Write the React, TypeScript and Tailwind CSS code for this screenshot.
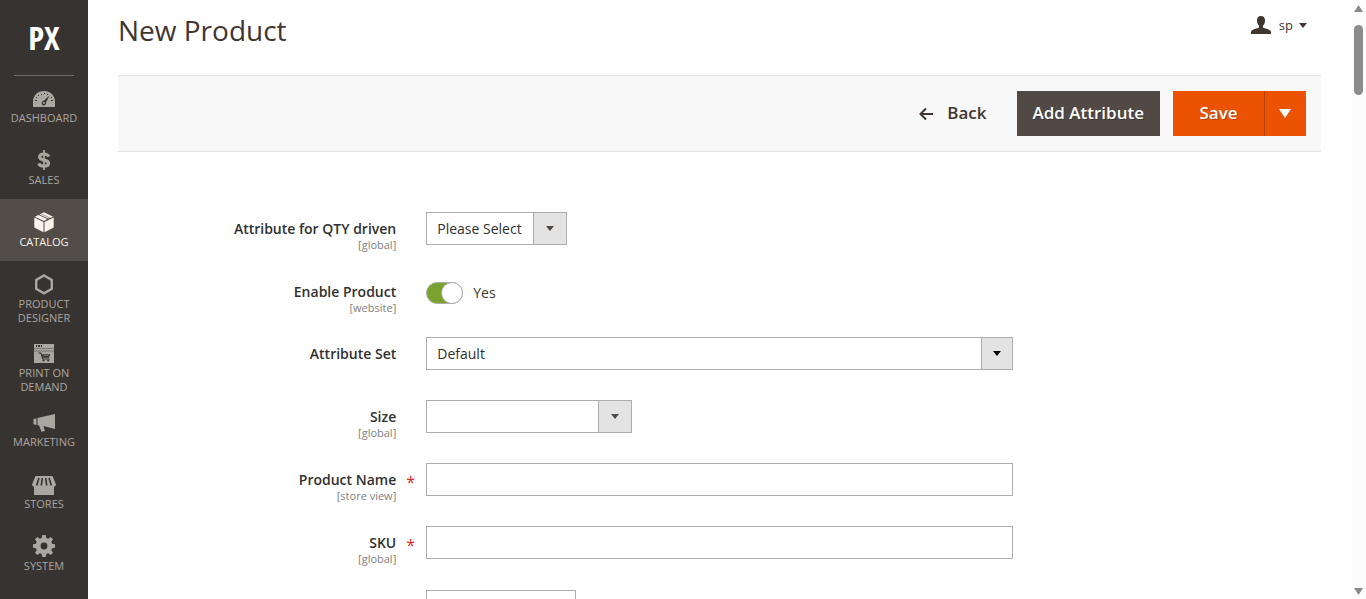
import { ReactNode } from "react";

interface MenuItemProps {
	label: string;
	icon: ReactNode;
	active?: boolean;
}

interface FieldProps {
	id: string;
	label: string;
	scope?: string;
	required?: boolean;
	className?: string;
	children: ReactNode;
}

interface SelectProps {
	id: string;
	options: string[];
	className: string;
	arrow?: string;
}

const DashboardIcon = () => (
	<svg width="24" height="24" viewBox="0 0 24 24" fill="currentColor">
		<path d="M1 21v-5C1 9.500 5.500 5 12 5s11 4.500 11 11v5z" />
		<g className="fill-[#373330]">
			<rect x="3" y="14" width="2" height="1" />
			<rect x="4" y="11" width="1" height="1" />
			<rect x="6" y="9" width="1" height="1" />
			<rect x="9" y="8" width="1" height="1" />
			<rect x="12" y="7" width="1" height="1" />
			<rect x="15" y="8" width="1" height="1" />
			<rect x="19" y="11" width="1" height="1" />
			<rect x="19" y="14" width="2" height="1" />
			<path d="M17.500 9.500 14 16.500a2.200 2.200 0 1 1-2.500-1.500z" />
		</g>
		<circle cx="12" cy="17" r="1" />
	</svg>
);

const SalesIcon = () => (
	<svg width="24" height="24" viewBox="0 0 24 24" fill="none" stroke="currentColor">
		<path strokeWidth="3.200" d="M16.800 8.600C15.900 6.700 14.200 6 12 6c-2.600 0-4.300 1.100-4.300 2.900 0 4.400 8.800 2.100 8.800 6.300 0 1.900-1.800 3-4.500 3-2.500 0-4.400-.9-5.300-2.900" />
		<path strokeWidth="1.800" d="M12 2v20" />
	</svg>
);

const CatalogIcon = () => (
	<svg width="24" height="24" viewBox="0 0 24 24" fill="currentColor">
		<path d="M2.300 7.600 11.500 12v10.200l-9.200-4.700z" />
		<path d="M21.700 7.600 12.500 12v10.200l9.200-4.700z" />
		<path d="m2.800 6.700 3.700-1.800 8.800 4.200-3.300 1.900z" />
		<path d="m7.400 4.400 4.600-2.200 9.200 4.500-4.800 1.900z" />
		<path d="m9 3.700 9 4.200" fill="none" strokeWidth=".5" className="stroke-[#524d49]" />
	</svg>
);

const DesignerIcon = () => (
	<svg width="24" height="24" viewBox="0 0 24 24" fill="none" stroke="currentColor" strokeWidth="2.400">
		<path d="m12 3.500 7.800 4.400v9L12 21.300l-7.800-4.400v-9z" />
	</svg>
);

const PrintIcon = () => (
	<svg width="24" height="24" viewBox="0 0 24 24" fill="currentColor">
		<path d="M2 3h20v19H2z" />
		<g className="fill-[#373330]">
			<rect x="4" y="4" width="1" height="2" />
			<rect x="6" y="4" width="2" height="2" />
			<rect x="9" y="4" width="1" height="2" />
			<path d="M9.500 13.200h8.800l-1.300 3.600h-6.300z" />
			<circle cx="11.500" cy="19.500" r="1.100" />
			<circle cx="16.200" cy="19.500" r="1.100" />
		</g>
		<g fill="none" className="stroke-[#373330]">
			<path strokeWidth=".4" d="M2 7.500h20" />
			<path strokeWidth=".5" d="M2 9.500q1.200 2 2.500 0 1.200 2 2.500 0 1.200 2 2.500 0 1.200 2 2.500 0 1.200 2 2.500 0 1.200 2 2.500 0 1.200 2 2.500 0 1.200 2 2.500 0" />
			<path strokeWidth="1.100" d="M6.500 12h2.300l2 6h6.700" />
		</g>
		<path d="M11.500 14.500h5" fill="none" stroke="currentColor" strokeWidth=".6" />
	</svg>
);

const MarketingIcon = () => (
	<svg width="24" height="24" viewBox="0 0 24 24" fill="currentColor">
		<path d="M1.500 9 4.500 8.500V15l-3-.8z" />
		<path d="M5.500 8 23 4v15L11.500 16l1.300 5-3.300.8L7 15.500l-1.500-.4z" />
	</svg>
);

const StoresIcon = () => (
	<svg width="24" height="24" viewBox="0 0 24 24" fill="currentColor">
		<path d="M3.500 4h17L24 12.500a2.300 2.300 0 0 1-2 2.300V23H2v-8.200a2.300 2.300 0 0 1-2-2.300z" />
		<g fill="none" strokeWidth="1.600" className="stroke-[#373330]">
			<path d="m7 6-2.300 7.500M10.300 6l-1 7.500M13.700 6l1 7.500M17 6l2.300 7.500" />
		</g>
	</svg>
);

const SystemIcon = () => (
	<svg width="24" height="24" viewBox="0 0 24 24" fill="currentColor">
		<path
			fillRule="evenodd"
			d="M10.300 1h3.400l.6 3 1.900.8L18.800 3 21 5.300l-1.700 2.500.8 1.900 2.900.6v3.400l-2.900.6-.8 1.900 1.700 2.500-2.200 2.300-2.600-1.700-1.900.8-.6 2.900h-3.400l-.6-2.900-1.900-.8L5.200 21 3 18.700l1.700-2.500-.8-1.900-2.900-.6v-3.400l2.900-.6.8-1.900L3 5.300 5.200 3l2.600 1.800 1.900-.8zM12 8.600a3.400 3.400 0 1 0 0 6.800 3.400 3.400 0 0 0 0-6.800z"
		/>
	</svg>
);

const Caret = ({ className }: { className: string }) => (
	<svg viewBox="0 0 8 5" preserveAspectRatio="none" className={className} fill="currentColor" aria-hidden="true">
		<path d="M0 0h8L4 5z" />
	</svg>
);

const MenuItem = ({ label, icon, active }: MenuItemProps) => (
	<li>
		<a
			href="#"
			className={
				active
					? "flex min-h-[62px] flex-col items-center bg-[#524d49] px-2 pt-[11px] pb-[5px] font-medium text-[#f7f3eb]"
					: "flex min-h-[62px] flex-col items-center px-2 pt-[11px] pb-[5px] text-[#aaa6a0]"
			}
		>
			{icon}
			<span className="mt-px text-center text-[11px] leading-[14px]">{label}</span>
		</a>
	</li>
);

const Field = ({ id, label, scope, required, className = "min-h-[63px]", children }: FieldProps) => (
	<div className={`flex items-start ${className}`}>
		<div className="flex w-1/4 pt-[7px]">
			<label htmlFor={id} className="flex-1 text-right">
				<span className="block leading-5 font-semibold text-[#303030]">{label}</span>
				{scope && <span className="block text-[11px] leading-3 text-[#808080]">{scope}</span>}
			</label>
			<span className="w-[30px] shrink-0 pl-2.5 text-base leading-6 text-[#e22626]">{required && "*"}</span>
		</div>
		<div className="w-1/2">{children}</div>
	</div>
);

const Select = ({ id, options, className, arrow = "w-[34px] text-[#514943]" }: SelectProps) => (
	<div className={`relative ${className}`}>
		<select id={id} className="h-[33px] w-full appearance-none border border-[#adadad] bg-white pr-[34px] pl-2.5 text-[#303030]">
			{options.map((option) => (
				<option key={option}>{option}</option>
			))}
		</select>
		<span className={`pointer-events-none absolute inset-y-0 right-0 flex items-center justify-center border border-[#adadad] bg-[#e3e3e3] ${arrow}`}>
			<Caret className="h-[5px] w-2" />
		</span>
	</div>
);

const inputClass = "block h-[33px] border border-[#adadad] bg-white px-2.5 text-[#303030]";

const Sidebar = () => (
	<nav className="w-[88px] shrink-0 bg-[#373330]">
		<a href="#" className="flex h-[75px] items-center justify-center font-['Open_Sans_Condensed','Open_Sans',sans-serif] text-[33px] font-bold text-white">
			PX
		</a>
		<ul className="relative before:absolute before:inset-x-3.5 before:top-0 before:h-px before:bg-[#736963]">
			<MenuItem label="DASHBOARD" icon={<DashboardIcon />} />
			<MenuItem label="SALES" icon={<SalesIcon />} />
			<MenuItem label="CATALOG" icon={<CatalogIcon />} active />
			<MenuItem label="PRODUCT DESIGNER" icon={<DesignerIcon />} />
			<MenuItem label="PRINT ON DEMAND" icon={<PrintIcon />} />
			<MenuItem label="MARKETING" icon={<MarketingIcon />} />
			<MenuItem label="STORES" icon={<StoresIcon />} />
			<MenuItem label="SYSTEM" icon={<SystemIcon />} />
		</ul>
	</nav>
);

const Toolbar = () => (
	<div className="flex items-center justify-end border-y border-[#e3e3e3] bg-[#f8f8f8] p-[15px] text-[17px] font-semibold">
		<button type="button" className="mr-[30px] flex h-[45px] items-center gap-3.5 text-[#41362f]">
			<svg width="14" height="14" viewBox="0 0 14 14" fill="none" stroke="currentColor" strokeWidth="2">
				<path d="M14 7H1.500M7 1.500 1.500 7 7 12.500" />
			</svg>
			Back
		</button>
		<button type="button" className="mr-[13px] h-[45px] bg-[#514943] px-4 text-white text-shadow-[1px_1px_0_rgba(0,0,0,0.25)]">
			Add Attribute
		</button>
		<button type="button" className="h-[45px] w-[91px] bg-[#eb5202] text-white text-shadow-[1px_1px_0_rgba(0,0,0,0.25)]">
			Save
		</button>
		<button type="button" aria-label="More save options" className="flex h-[45px] w-[42px] items-center justify-center border-l border-[#b84002] bg-[#eb5202] pr-0.5 text-white">
			<Caret className="h-[9px] w-3" />
		</button>
	</div>
);

const Scrollbar = () => (
	<div className="flex w-[15px] shrink-0 flex-col items-center bg-[#fcfcfc] pt-[5px] pb-1 text-[#8b8b8b]" aria-hidden="true">
		<Caret className="h-[7px] w-[9px] rotate-180" />
		<div className="mt-[13px] h-[70px] w-[9px] rounded-full bg-[#8b8b8b]" />
		<Caret className="mt-auto h-[7px] w-[9px]" />
	</div>
);

const App = () => {
	return (
		<div className="flex h-screen overflow-hidden bg-white font-['Open_Sans',sans-serif] text-sm text-[#41362f]">
			<Sidebar />
			<main className="min-w-0 flex-1 overflow-hidden px-[30px]">
				<header className="flex h-[75px] items-start justify-between">
					<h1 className="pt-3 text-[28px] leading-9">New Product</h1>
					<button type="button" className="mt-[15px] mr-3.5 flex h-5 items-center text-[13px]">
						<svg width="20" height="18" viewBox="0 0 20 18" fill="currentColor" className="mr-2">
							<path d="M10 0c2.700 0 4 1.700 4 4.500 0 2.500-.8 4-2 5.300v1.700c1 1 7.500 1.700 8 4.200V18H0v-2.300c.5-2.500 7-3.200 8-4.200V9.800C6.800 8.500 6 7 6 4.500 6 1.700 7.300 0 10 0z" />
						</svg>
						sp
						<Caret className="ml-1.5 h-[5px] w-2" />
					</button>
				</header>
				<Toolbar />
				<form className="px-[15px] pt-[60px]">
					<Field id="qty-driven" label="Attribute for QTY driven" scope="[global]">
						<Select id="qty-driven" options={["Please Select"]} className="w-[141px]" />
					</Field>
					<Field id="enable-product" label="Enable Product" scope="[website]" className="min-h-[62px]">
						<div className="flex h-9 items-center gap-2.5">
							<span className="relative flex h-[22px] w-[37px]">
								<input
									id="enable-product"
									type="checkbox"
									defaultChecked
									className="peer size-full appearance-none rounded-full border border-[#adadad] bg-[#e3e3e3] checked:bg-[#79a22e]"
								/>
								<span className="pointer-events-none absolute top-0 left-0 size-[22px] rounded-full border border-[#adadad] bg-white peer-checked:right-0 peer-checked:left-auto" />
							</span>
							<span>Yes</span>
						</div>
					</Field>
					<Field id="attribute-set" label="Attribute Set">
						<Select id="attribute-set" options={["Default"]} className="w-full" arrow="w-8 text-black" />
					</Field>
					<Field id="size" label="Size" scope="[global]">
						<Select id="size" options={[""]} className="w-[206px]" />
					</Field>
					<Field id="product-name" label="Product Name" scope="[store view]" required>
						<input id="product-name" type="text" className={`${inputClass} w-full`} />
					</Field>
					<Field id="sku" label="SKU" scope="[global]" required className="min-h-16">
						<input id="sku" type="text" className={`${inputClass} w-full`} />
					</Field>
					<div className="flex">
						<div className="w-1/4" />
						<input type="text" aria-label="Price" className={`${inputClass} w-[150px]`} />
					</div>
				</form>
			</main>
			<Scrollbar />
		</div>
	);
};

export default App;
